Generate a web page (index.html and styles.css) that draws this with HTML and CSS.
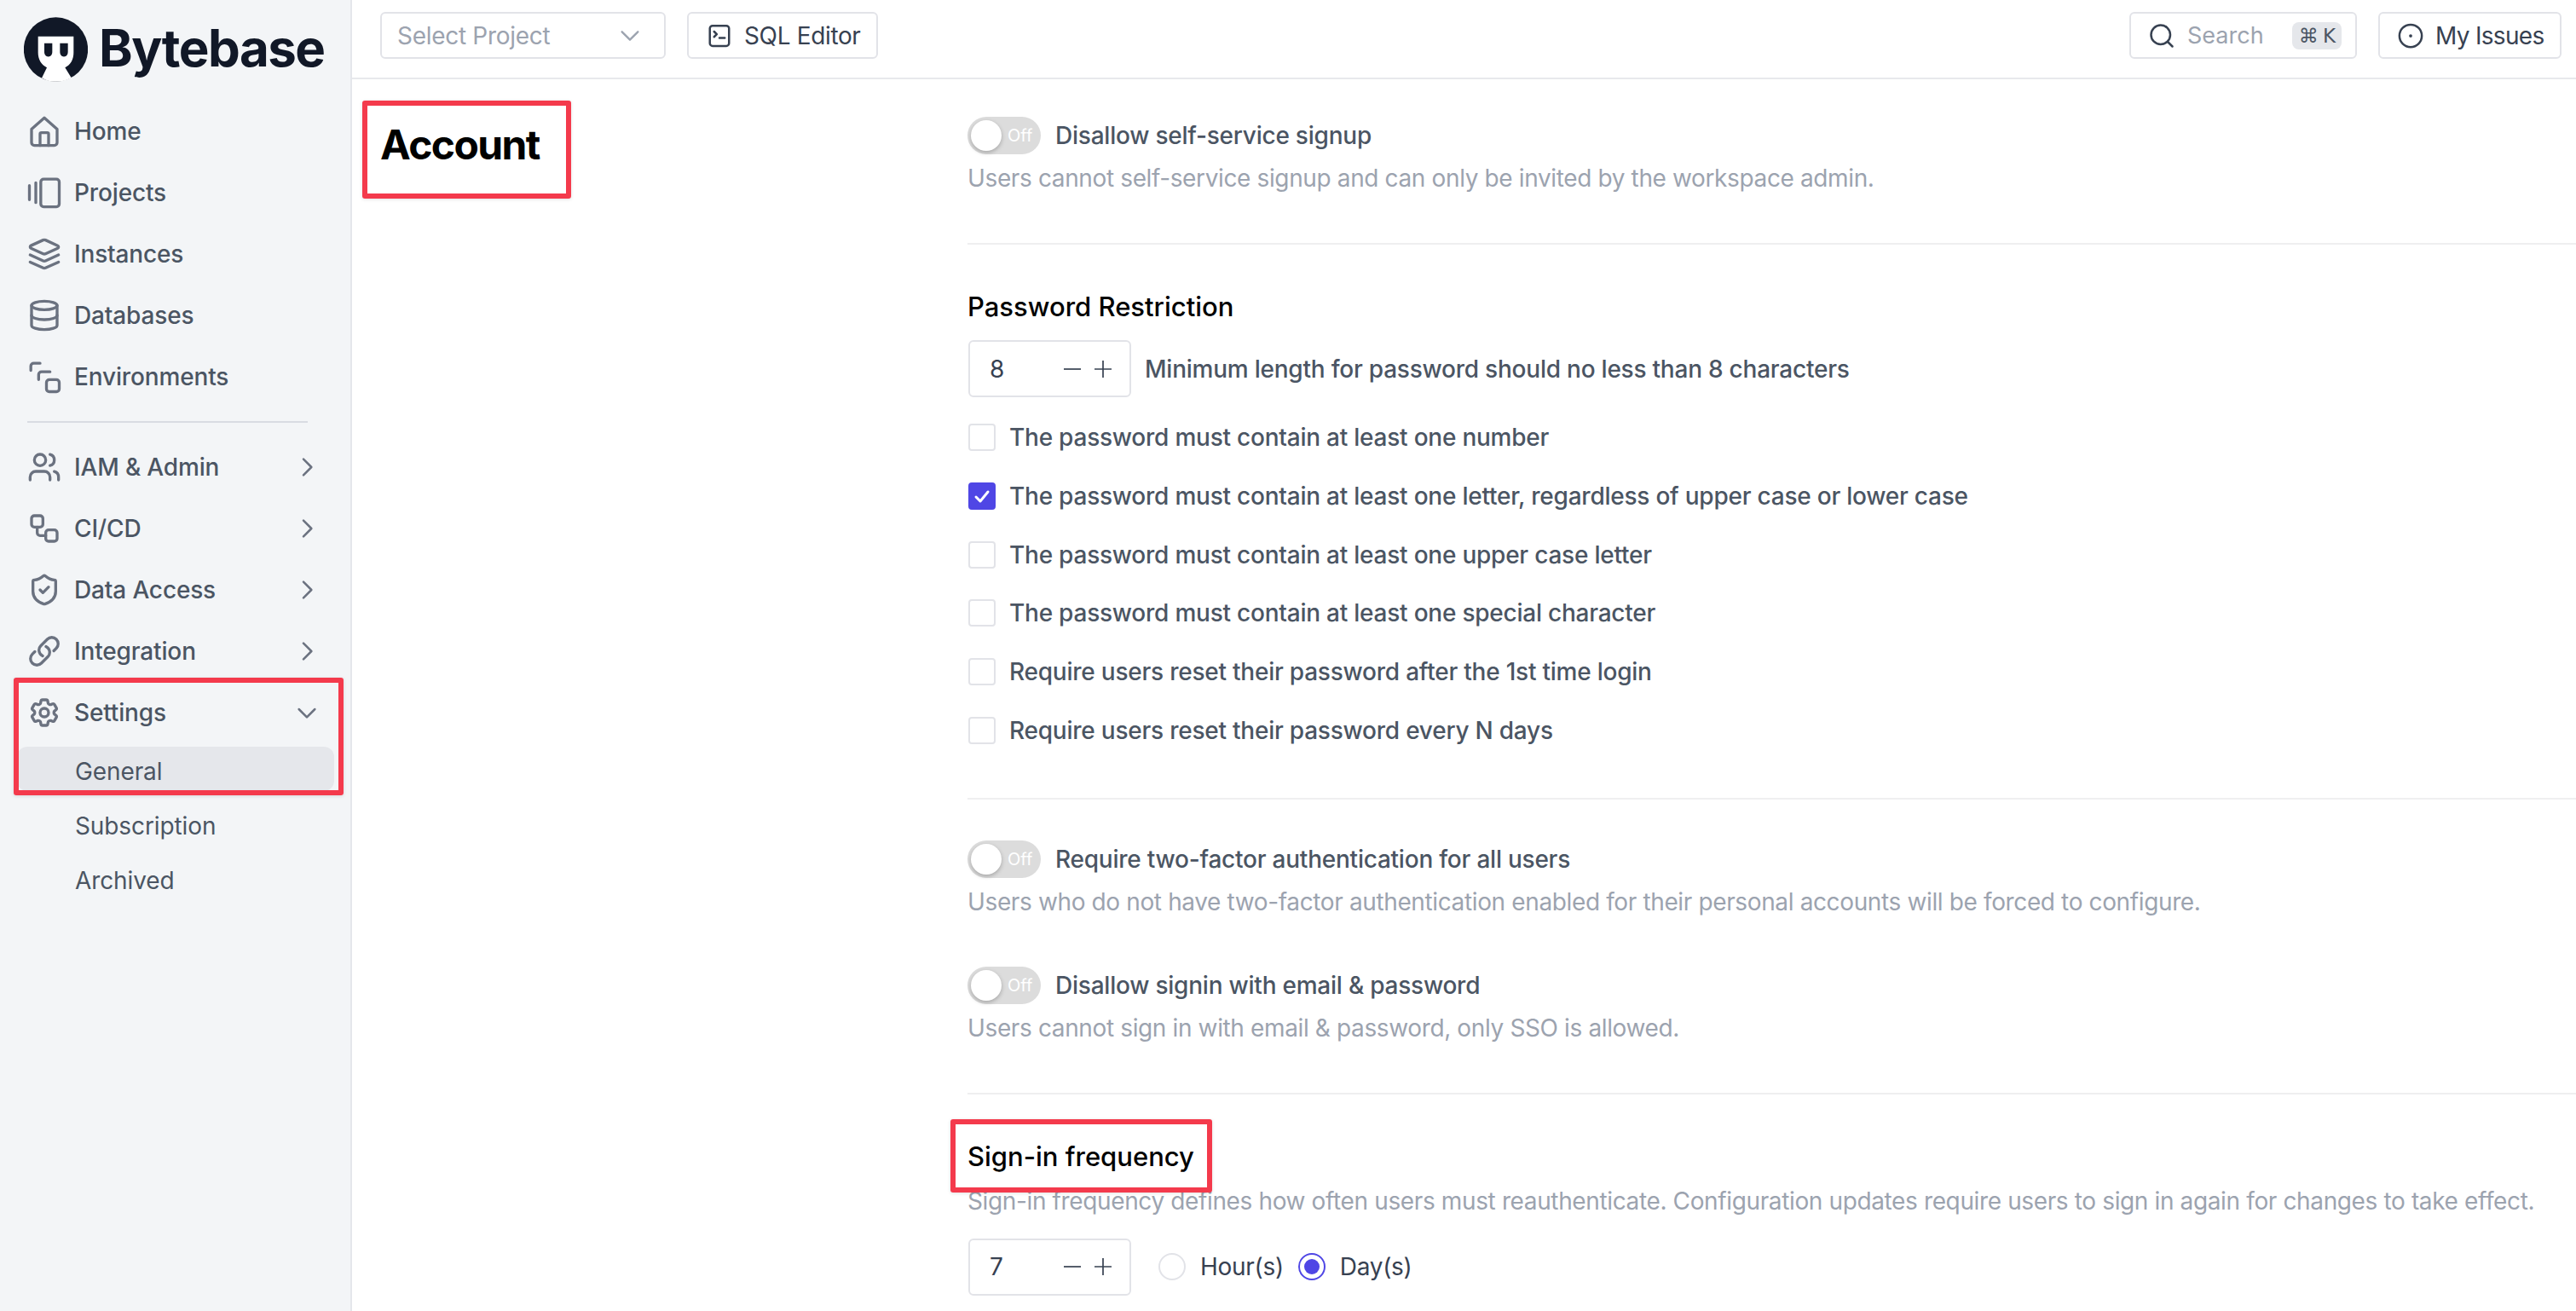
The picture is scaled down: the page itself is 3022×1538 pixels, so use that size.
FILE: index.html
```html
<!DOCTYPE html>
<html lang="en">
<head>
<meta charset="utf-8">
<title>Bytebase - General</title>
<link rel="stylesheet" href="styles.css">
</head>
<body>
<div class="app">
  <aside class="sidebar">
    <div class="brand">
      <svg class="logo" viewBox="25 30 225 227">
        <circle cx="137.5" cy="143.5" r="113" fill="#111827"/>
        <path d="M75 98H200V155C200 178 190 198 170 207L192 243C175 252 157 257 137 257C118 257 102 252 88 244L106 207C86 198 75 178 75 155Z" fill="#fff"/>
        <path d="M97 122H125V152C125 162 120 169 111 169C102 169 97 162 97 152Z" fill="#111827"/>
        <path d="M152 122H180V152C180 162 175 169 166 169C157 169 152 162 152 152Z" fill="#111827"/>
      </svg>
      <span class="brand-name">Bytebase</span>
    </div>
    <nav class="nav">
      <a class="nav-row"><svg class="ico" viewBox="0 0 24 24"><path d="M3 10.500 12 2.500l9 8V20a2 2 0 0 1-2 2H5a2 2 0 0 1-2-2z"/><path d="M9 22v-8a1 1 0 0 1 1-1h4a1 1 0 0 1 1 1v8"/></svg><span>Home</span></a>
      <a class="nav-row"><svg class="ico" viewBox="0 0 24 24"><path d="M1.500 7v10M6 5v14"/><rect x="9.500" y="2.500" width="13" height="19.500" rx="2"/></svg><span>Projects</span></a>
      <a class="nav-row"><svg class="ico" viewBox="0 0 24 24"><path d="M12.830 2.180a2 2 0 0 0-1.660 0L2.600 6.080a1 1 0 0 0 0 1.830l8.580 3.910a2 2 0 0 0 1.660 0l8.580-3.900a1 1 0 0 0 0-1.830Z"/><path d="m22 17.650-9.170 4.160a2 2 0 0 1-1.660 0L2 17.650"/><path d="m22 12.650-9.170 4.160a2 2 0 0 1-1.660 0L2 12.650"/></svg><span>Instances</span></a>
      <a class="nav-row"><svg class="ico" viewBox="0 0 24 24"><ellipse cx="12" cy="5" rx="9" ry="3"/><path d="M3 5v14c0 1.660 4 3 9 3s9-1.340 9-3V5"/><path d="M3 12c0 1.660 4 3 9 3s9-1.340 9-3"/></svg><span>Databases</span></a>
      <a class="nav-row"><svg class="ico" viewBox="0 0 24 24"><path d="M9 2.500H4.500a2 2 0 0 0-2 2V7.500"/><path d="M16 8.500h-6a2 2 0 0 0-2 2v3.500"/><rect x="13.500" y="14" width="9" height="8.500" rx="2"/></svg><span>Environments</span></a>
      <div class="nav-divider"></div>
      <a class="nav-row"><svg class="ico" viewBox="0 0 24 24"><path d="M16 21v-2a4 4 0 0 0-4-4H6a4 4 0 0 0-4 4v2"/><circle cx="9" cy="7" r="4"/><path d="M22 21v-2a4 4 0 0 0-3-3.870"/><path d="M16 3.130a4 4 0 0 1 0 7.750"/></svg><span>IAM &amp; Admin</span><svg class="chev" viewBox="0 0 24 24"><path d="m9 5 7 7-7 7"/></svg></a>
      <a class="nav-row"><svg class="ico" viewBox="0 0 24 24"><rect x="3" y="3" width="8" height="8" rx="2"/><path d="M7 11v4a2 2 0 0 0 2 2h4"/><rect x="13" y="13" width="8" height="8" rx="2"/></svg><span>CI/CD</span><svg class="chev" viewBox="0 0 24 24"><path d="m9 5 7 7-7 7"/></svg></a>
      <a class="nav-row"><svg class="ico" viewBox="0 0 24 24"><path d="M20 13c0 5-3.500 7.500-7.660 8.950a1 1 0 0 1-.67-.01C7.500 20.500 4 18 4 13V6a1 1 0 0 1 1-1c2 0 4.500-1.200 6.240-2.720a1.170 1.170 0 0 1 1.520 0C14.510 3.810 17 5 19 5a1 1 0 0 1 1 1z"/><path d="m9 12 2 2 4-4"/></svg><span>Data Access</span><svg class="chev" viewBox="0 0 24 24"><path d="m9 5 7 7-7 7"/></svg></a>
      <a class="nav-row"><svg class="ico" viewBox="0 0 24 24"><path d="M13.190 8.688a4.500 4.500 0 0 1 1.242 7.244l-4.500 4.500a4.500 4.500 0 0 1-6.364-6.364l1.757-1.757m13.350-.622 1.757-1.757a4.500 4.500 0 0 0-6.364-6.364l-4.500 4.500a4.500 4.500 0 0 0 1.242 7.244"/></svg><span>Integration</span><svg class="chev" viewBox="0 0 24 24"><path d="m9 5 7 7-7 7"/></svg></a>
      <div class="nav-group">
        <a class="nav-row"><svg class="ico" viewBox="0 0 24 24"><path d="M9.594 3.940c.09-.542.56-.94 1.110-.94h2.593c.55 0 1.020.398 1.110.94l.213 1.281c.063.374.313.686.645.87.074.04.147.083.22.127.325.196.72.257 1.075.124l1.217-.456a1.125 1.125 0 0 1 1.370.49l1.296 2.247a1.125 1.125 0 0 1-.26 1.431l-1.003.827c-.293.241-.438.613-.43.992a7.723 7.723 0 0 1 0 .255c-.008.378.137.75.43.991l1.004.827c.424.35.534.955.26 1.430l-1.298 2.247a1.125 1.125 0 0 1-1.369.491l-1.217-.456c-.355-.133-.75-.072-1.076.124a6.470 6.470 0 0 1-.22.128c-.331.183-.581.495-.644.869l-.213 1.281c-.09.543-.56.94-1.110.94h-2.594c-.55 0-1.019-.398-1.110-.94l-.213-1.281c-.062-.374-.312-.686-.644-.87a6.520 6.520 0 0 1-.22-.127c-.325-.196-.72-.257-1.076-.124l-1.217.456a1.125 1.125 0 0 1-1.369-.49l-1.297-2.247a1.125 1.125 0 0 1 .26-1.431l1.004-.827c.292-.24.437-.613.43-.991a6.932 6.932 0 0 1 0-.255c.007-.38-.138-.751-.43-.992l-1.004-.827a1.125 1.125 0 0 1-.26-1.430l1.297-2.247a1.125 1.125 0 0 1 1.370-.491l1.216.456c.356.133.751.072 1.076-.124.072-.044.146-.086.22-.128.332-.183.582-.495.644-.869l.214-1.280Z"/><circle cx="12" cy="12" r="3"/></svg><span>Settings</span><svg class="chev" viewBox="0 0 24 24"><path d="m5 9 7 7 7-7"/></svg></a>
        <a class="sub-row sub-active"><span>General</span></a>
        <div class="mark mark-nav"></div>
      </div>
      <a class="sub-row"><span>Subscription</span></a>
      <a class="sub-row"><span>Archived</span></a>
    </nav>
  </aside>

  <div class="main">
    <header class="topbar">
      <div class="select"><span>Select Project</span><svg class="sel-chev" viewBox="0 0 24 24"><path d="m4 8 8 8 8-8"/></svg></div>
      <button class="btn btn-sql"><svg class="btn-ico" viewBox="0 0 24 24"><rect x="3" y="2.500" width="18" height="19" rx="2.500"/><path d="m7 8 2.500 2.500L7 13M12 14h5"/></svg><span>SQL Editor</span></button>
      <div class="spacer"></div>
      <div class="search"><svg class="btn-ico" viewBox="0 0 24 24"><circle cx="11" cy="11" r="9"/><path d="m18 18 4 4"/></svg><span class="search-text">Search</span><kbd class="kbd">⌘ K</kbd></div>
      <button class="btn btn-issues"><svg class="btn-ico" viewBox="0 0 24 24"><circle cx="12" cy="12" r="10.500"/><circle class="dot" cx="12" cy="12" r="1.500"/></svg><span>My Issues</span></button>
    </header>

    <main class="content">
      <div class="title-col">
        <h1 class="title">Account<span class="mark mark-title"></span></h1>
      </div>
      <div class="settings">
        <div class="toggle-row first"><span class="toggle"><i class="knob"></i><em>Off</em></span><span class="label">Disallow self-service signup</span></div>
        <p class="desc">Users cannot self-service signup and can only be invited by the workspace admin.</p>
        <hr class="rule rule-a">

        <h2 class="heading">Password Restriction</h2>
        <div class="stepper-row">
          <div class="stepper"><span>8</span><svg class="step" viewBox="0 0 24 24"><path d="M2 12h20"/></svg><svg class="step" viewBox="0 0 24 24"><path d="M2 12h20M12 2v20"/></svg></div>
          <span class="label">Minimum length for password should no less than 8 characters</span>
        </div>
        <ul class="checks">
          <li><span class="box"></span><span class="label">The password must contain at least one number</span></li>
          <li><span class="box box-on"><svg viewBox="0 0 24 24"><path d="m5 13 5 5 9-11"/></svg></span><span class="label">The password must contain at least one letter, regardless of upper case or lower case</span></li>
          <li><span class="box"></span><span class="label">The password must contain at least one upper case letter</span></li>
          <li><span class="box"></span><span class="label">The password must contain at least one special character</span></li>
          <li><span class="box"></span><span class="label">Require users reset their password after the 1st time login</span></li>
          <li><span class="box"></span><span class="label">Require users reset their password every N days</span></li>
        </ul>
        <hr class="rule rule-b">

        <div class="toggle-row second"><span class="toggle"><i class="knob"></i><em>Off</em></span><span class="label">Require two-factor authentication for all users</span></div>
        <p class="desc">Users who do not have two-factor authentication enabled for their personal accounts will be forced to configure.</p>
        <div class="toggle-row third"><span class="toggle"><i class="knob"></i><em>Off</em></span><span class="label">Disallow signin with email &amp; password</span></div>
        <p class="desc">Users cannot sign in with email &amp; password, only SSO is allowed.</p>
        <hr class="rule rule-a">

        <h2 class="heading heading-freq"><span class="heading-inner">Sign-in frequency<span class="mark mark-freq"></span></span></h2>
        <p class="desc desc-freq">Sign-in frequency defines how often users must reauthenticate. Configuration updates require users to sign in again for changes to take effect.</p>
        <div class="stepper-row freq-row">
          <div class="stepper"><span>7</span><svg class="step" viewBox="0 0 24 24"><path d="M2 12h20"/></svg><svg class="step" viewBox="0 0 24 24"><path d="M2 12h20M12 2v20"/></svg></div>
          <span class="radio"></span><span class="radio-label">Hour(s)</span>
          <span class="radio radio-on"></span><span class="radio-label">Day(s)</span>
        </div>
      </div>
    </main>
  </div>
</div>
</body>
</html>
```
FILE: styles.css
```css
* { box-sizing: border-box; }
html, body { margin: 0; height: 100%; background: #fff; }
body { font-family: Inter, "Liberation Sans", sans-serif; font-size: 28px; color: #374151; overflow: hidden; }
.app { display: flex; height: 100vh; overflow: hidden; }

/* sidebar */
.sidebar { width: 413px; flex: none; background: #f3f5f7; border-right: 2px solid #e5e7eb; }
.brand { height: 118px; padding: 20px 0 0 28px; display: flex; align-items: flex-start; gap: 13px; }
.logo { width: 75px; height: 76px; flex: none; }
.brand-name { font-weight: 700; font-size: 60px; line-height: 72px; letter-spacing: -1.500px; color: #111827; }
.nav { display: flex; flex-direction: column; }
.nav-row { height: 72px; display: flex; align-items: center; padding: 0 35px 0 32px; gap: 15px; font-weight: 500; color: #4b5563; letter-spacing: -.15px; }
.nav-row > span { flex: 1; }
.ico { width: 40px; height: 40px; flex: none; fill: none; stroke: #6b7280; stroke-width: 2; stroke-linecap: round; stroke-linejoin: round; }
.chev { width: 32px; height: 32px; flex: none; fill: none; stroke: #6b7280; stroke-width: 1.900; stroke-linecap: round; stroke-linejoin: round; }
.nav-divider { height: 2px; margin: 16px 50px 16px 32px; background: #d9dce2; }
.nav-group { position: relative; }
.sub-row { height: 64px; display: flex; align-items: center; margin: 1px 19px -1px 20px; padding: 0 0 0 68px; font-weight: 400; color: #4b5563; position: relative; letter-spacing: -.1px; }
.sub-active::before { content: ""; position: absolute; left: 0; right: 0; top: 3px; height: 52px; background: #e5e7eb; border-radius: 12px; }
.sub-row span { position: relative; }
.mark { position: absolute; border: 6px solid #f43a4c; border-radius: 3px; box-shadow: 0 1px 4px rgba(0,0,0,.12); pointer-events: none; }
.mark-nav { left: 16px; right: 8px; top: -5px; height: 138px; }

/* topbar */
.main { flex: 1; min-width: 0; display: flex; flex-direction: column; }
.topbar { height: 93px; flex: none; display: flex; align-items: flex-start; padding: 14px 17px 0 33px; border-bottom: 2px solid #e8e9ec; }
.select { width: 335px; height: 55px; border: 2px solid #e2e3e8; border-radius: 6px; display: flex; align-items: center; justify-content: space-between; padding: 0 26px 0 18px; color: #9ca3af; letter-spacing: -.3px; }
.sel-chev { width: 28px; height: 28px; fill: none; stroke: #9ca3af; stroke-width: 2; stroke-linecap: round; stroke-linejoin: round; }
.btn { height: 55px; background: #fff; border: 2px solid #e2e3e8; border-radius: 6px; display: flex; align-items: center; font: inherit; color: #374151; padding: 0; letter-spacing: -.35px; }
.btn-sql { width: 224px; margin-left: 25px; padding-left: 21px; gap: 14px; }
.btn-issues { width: 215px; margin-left: 25px; padding-left: 21px; gap: 14px; letter-spacing: -.7px; }
.btn-ico { width: 30px; height: 30px; flex: none; fill: none; stroke: #374151; stroke-width: 2; stroke-linecap: round; stroke-linejoin: round; }
.dot { fill: #374151; stroke: none; }
.spacer { flex: 1; }
.search { width: 267px; height: 55px; border: 2px solid #e2e3e8; border-radius: 6px; display: flex; align-items: center; padding: 0 16px 0 21px; }
.search-text { color: #9ca3af; margin-left: 15px; flex: 1; font-size: 27px; }
.kbd { width: 58px; height: 32px; background: #e5e7eb; border-radius: 8px; display: flex; align-items: center; justify-content: center; font-family: "DejaVu Sans", Inter, sans-serif; font-size: 23px; color: #4b5563; letter-spacing: -1px; }

/* content */
.content { flex: 1; min-height: 0; display: flex; overflow: hidden; padding-left: 33px; }
.title-col { width: 689px; flex: none; padding-top: 49px; }
.title { position: relative; display: inline-block; margin: 0; font-size: 48px; line-height: 56px; font-weight: 700; color: #000; letter-spacing: -1.600px; }
.mark-title { left: -21px; top: -24px; width: 245px; height: 115px; }
.settings { flex: 1; min-width: 0; }
.toggle-row { display: flex; align-items: center; gap: 17px; height: 44px; }
.first { margin-top: 44px; }
.second { margin-top: 48px; }
.third { margin-top: 56px; }
.toggle { width: 86px; height: 44px; background: #dcdcdc; border-radius: 22px; display: flex; align-items: center; flex: none; padding: 0 4px; }
.knob { width: 36px; height: 36px; background: #fff; border-radius: 50%; box-shadow: 0 2px 5px rgba(0,0,0,.25); flex: none; }
.toggle em { font-style: normal; font-size: 20px; color: #fff; margin-left: 7px; }
.label { font-weight: 500; color: #4b5563; white-space: nowrap; letter-spacing: -.23px; }
.desc { margin: 8px 0 0; line-height: 40px; color: #9ca3af; white-space: nowrap; letter-spacing: -.37px; }
.rule { border: 0; height: 2px; background: #efeff0; margin: 56px 0 0; }
.rule-b { margin-top: 63px; }
.heading { margin: 53px 0 0; font-size: 31px; line-height: 40px; font-weight: 500; color: #000; letter-spacing: 0; }
.heading-inner { position: relative; display: inline-block; }
.mark-freq { left: -20px; top: -24px; width: 307px; height: 86px; }
.desc-freq { margin-top: 12px; }
.stepper-row { display: flex; align-items: center; margin-top: 19px; gap: 16px; height: 67px; }
.freq-row { margin-top: 24px; gap: 0; }
.stepper { width: 191px; height: 67px; margin-left: 1px; border: 2px solid #e2e3e8; border-radius: 6px; display: flex; align-items: center; padding: 0 19px 0 23px; flex: none; color: #374151; }
.stepper span { flex: 1; }
.step { width: 24px; height: 24px; fill: none; stroke: #374151; stroke-width: 1.700; margin-left: 12px; }
.checks { list-style: none; margin: 31px 0 0 1px; padding: 0; display: flex; flex-direction: column; gap: 36.800px; }
.checks li { display: flex; align-items: center; height: 32px; gap: 16px; }
.box { width: 32px; height: 32px; border: 2px solid #e2e3e8; border-radius: 4px; flex: none; background: #fff; }
.box-on { background: #4f46e5; border-color: #4f46e5; display: flex; align-items: center; justify-content: center; }
.box-on svg { width: 24px; height: 24px; fill: none; stroke: #fff; stroke-width: 3; stroke-linecap: round; stroke-linejoin: round; }
.radio { width: 32px; height: 32px; border: 2px solid #e2e3e8; border-radius: 50%; flex: none; margin-left: 32px; background: #fff; }
.radio-label { margin-left: 17px; color: #374151; letter-spacing: -.3px; }
.radio-label + .radio { margin-left: 17px; }
.radio-on { border-color: #4f46e5; display: flex; align-items: center; justify-content: center; }
.radio-on::after { content: ""; width: 18px; height: 18px; border-radius: 50%; background: #4f46e5; }
```
